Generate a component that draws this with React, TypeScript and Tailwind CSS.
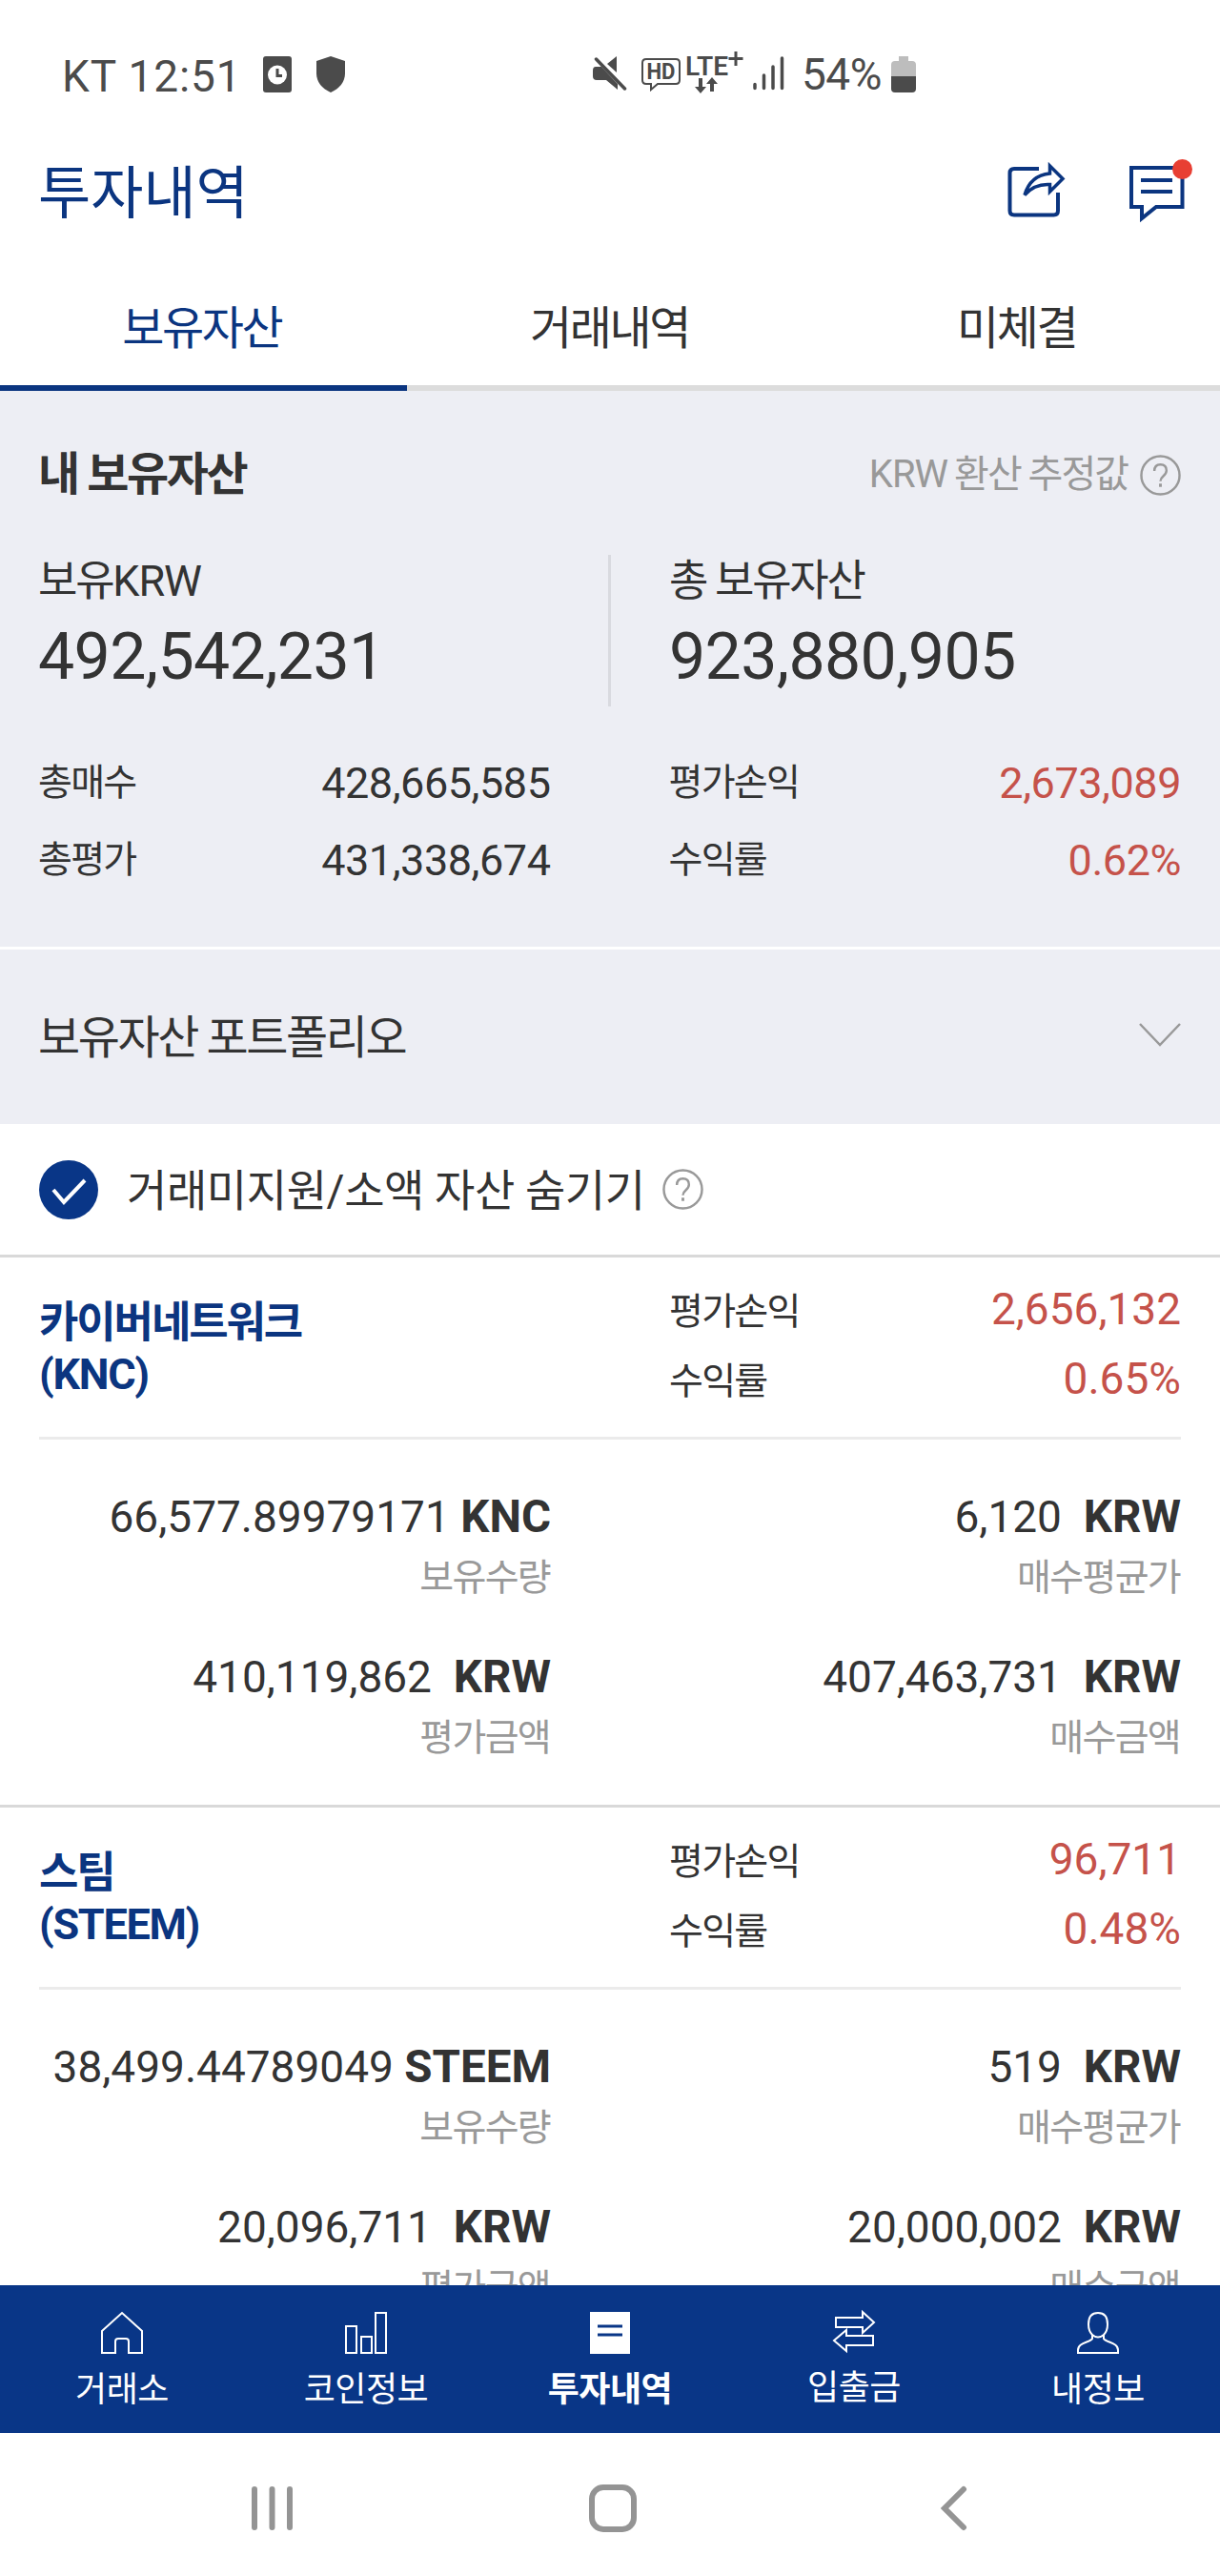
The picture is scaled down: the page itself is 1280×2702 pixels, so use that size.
import type { ReactNode } from "react";

interface Holding {
    name: string;
    symbol: string;
    quantity: string;
    profit: string;
    rate: string;
    avgPrice: string;
    evaluated: string;
    bought: string;
}

const holdings: Holding[] = [
    {
        name: "카이버네트워크",
        symbol: "KNC",
        quantity: "66,577.89979171",
        profit: "2,656,132",
        rate: "0.65%",
        avgPrice: "6,120",
        evaluated: "410,119,862",
        bought: "407,463,731",
    },
    {
        name: "스팀",
        symbol: "STEEM",
        quantity: "38,499.44789049",
        profit: "96,711",
        rate: "0.48%",
        avgPrice: "519",
        evaluated: "20,096,711",
        bought: "20,000,002",
    },
];

function StatusBar() {
    return (
        <div className="flex h-[160px] items-center pl-[65px] text-[46px] leading-[60px] text-[#4b4b4b]">
            <span className="w-[211px] whitespace-nowrap tracking-[0.9px]">KT 12:51</span>
            <svg className="mb-[5px] h-[38px] w-[30px]" viewBox="0 0 30 38" fill="none">
                <rect width="30" height="38" rx="3" fill="#4b4b4b" />
                <circle cx="15" cy="19.5" r="10" fill="#fff" />
                <path d="M15 13v7.5h5" stroke="#4b4b4b" strokeWidth="3" />
            </svg>
            <svg className="mb-[5px] ml-[26px] h-[38px] w-[30px]" viewBox="0 0 30 38" fill="#4b4b4b">
                <path d="M15 0l15 5v13c0 9-6 16-15 20C6 34 0 27 0 18V5z" />
            </svg>
            <svg className="mb-[7px] ml-[260px] h-[36px] w-[36px]" viewBox="0 0 36 36" fill="#4b4b4b">
                <path d="M3 11h6l17 18v6L14 25H4q-4 0-4-4v-6q0-4 3-4z" />
                <path d="M25 0v17L15 8z" />
                <path d="M3.500 3l30 31" stroke="#4b4b4b" strokeWidth="3.500" strokeLinecap="round" />
            </svg>
            <svg className="mb-[4px] ml-[15px] h-[36px] w-[41px]" viewBox="0 0 41 36" fill="none">
                <path d="M5 2h31q4 0 4 4v18q0 4-4 4H17l-7 6v-6H5q-4 0-4-4V6q0-4 4-4z" stroke="#4b4b4b" strokeWidth="2" />
                <text x="20.500" y="23" textAnchor="middle" fontSize="23" fontWeight="700" fill="#4b4b4b" textLength="30" lengthAdjust="spacingAndGlyphs">HD</text>
            </svg>
            <svg className="mb-[7px] ml-[6px] h-[46px] w-[62px]" viewBox="0 0 62 46" fill="none">
                <text x="-1" y="25" fontSize="28" fontWeight="600" fill="#4b4b4b" textLength="45" lengthAdjust="spacingAndGlyphs">LTE</text>
                <path d="M52 0v15M44.500 7.500h15" stroke="#4b4b4b" strokeWidth="3" />
                <path d="M15 28v11M27 42V32" stroke="#4b4b4b" strokeWidth="4" />
                <path d="M9 37h12l-6 7zM21 34h12l-6-7z" fill="#4b4b4b" />
            </svg>
            <svg className="mb-[6px] ml-[8px] h-[36px] w-[33px]" viewBox="0 0 33 36" stroke="#4b4b4b" strokeWidth="3.500" strokeLinecap="round">
                <path d="M2 29.500v4M11.500 20v13.500M21 11v22.500M30.500 2v31.500" />
            </svg>
            <span className="mb-[5px] ml-[18px] w-[94px] tracking-[-0.5px]">54%</span>
            <svg className="mb-[5px] h-[38px] w-[26px]" viewBox="0 0 26 38">
                <path d="M8 0h10v5h4q4 0 4 4v12H0V9q0-4 4-4h4z" fill="#bdbdbd" />
                <path d="M0 21h26v13q0 4-4 4H4q-4 0-4-4z" fill="#4b4b4b" />
            </svg>
        </div>
    );
}

function Header() {
    return (
        <header className="flex h-[88px] justify-between pl-[40px] pr-[37px]">
            <h1 className="text-[60px] leading-[88px] text-[#0b3580]">투자내역</h1>
            <div className="flex items-start">
                <svg className="mt-[9px] h-[60px] w-[62px]" viewBox="0 0 62 60" fill="none" stroke="#0b3580" strokeWidth="4">
                    <path d="M33 8H7Q2.500 8 2.500 12.500v39.500q0 4.500 4.500 4.500h41.500q4.500 0 4.500-4.500V33" />
                    <path d="M44.500 5l13.500 13.500-13.500 13.500v-7.500q-16-1-26.500 11Q24 15 44.500 13z" strokeWidth="3.500" />
                </svg>
                <div className="relative ml-[66px] mt-[7px] pt-[7px]">
                    <svg className="h-[60px] w-[58px]" viewBox="0 0 58 60" fill="none" stroke="#0b3580" strokeWidth="4">
                        <path d="M2 2h53.500v41H28L13 55V43H2z" />
                        <path d="M12 15h33M12 27h33" />
                    </svg>
                    <span className="absolute -right-[8px] top-0 h-[21px] w-[21px] rounded-full bg-[#e83f33]" />
                </div>
            </div>
        </header>
    );
}

function Tabs() {
    return (
        <nav className="mt-[36px] grid h-[126px] grid-cols-3 text-center text-[48px] leading-[122px] tracking-[-0.05em]">
            <div className="h-[126px] border-b-[6px] border-[#0b3580] pr-[3px] text-[#0b3580]">보유자산</div>
            <div className="h-[126px] border-b-[6px] border-[#dcdcdc] pr-[1px]">거래내역</div>
            <div className="h-[126px] border-b-[6px] border-[#dcdcdc]">미체결</div>
        </nav>
    );
}

function HelpIcon() {
    return (
        <svg className="h-[43px] w-[43px]" viewBox="0 0 44 44" fill="none" stroke="#999" strokeWidth="2.500">
            <circle cx="22" cy="22" r="20.500" />
            <path d="M15.500 17.500q0-7 6.500-7t6.500 6.500q0 3-3.500 6-3 2.500-3 5.500" />
            <path d="M22 31v3.500" strokeWidth="3" />
        </svg>
    );
}

function SummaryRow({ label, value, red }: { label: string; value: string; red?: boolean }) {
    return (
        <div className="flex h-[81px] items-center justify-between">
            <span className="text-[39px] tracking-[-1.7px]">{label}</span>
            <span className={red ? "text-[45px] tracking-[-0.45px] text-[#c5524a]" : "text-[45px] tracking-[-0.45px]"}>{value}</span>
        </div>
    );
}

function Summary() {
    return (
        <section className="h-[583px] bg-[#edeef4] pl-[40px] pr-[41px] pt-[58px]">
            <div className="flex h-[60px] items-center justify-between">
                <h2 className="text-[48px] font-bold tracking-[-0.05em]">내 보유자산</h2>
                <div className="flex items-center text-[40px] tracking-[-0.05em] text-[#999]">
                    <span className="mr-[7px] tracking-[-1px]">KRW</span>
                    <span className="mr-[13px]">환산 추정값</span>
                    <HelpIcon />
                </div>
            </div>
            <div className="mt-[54px] flex h-[159px]">
                <div className="w-[598px]">
                    <div className="text-[45px] leading-[56px] tracking-[-0.05em]">
                        보유<span className="tracking-[-1.1px]">KRW</span>
                    </div>
                    <div className="mt-[11px] text-[68px] leading-[80px] tracking-[-0.65px]">492,542,231</div>
                </div>
                <div className="w-[3px] bg-[#d9dadf]" />
                <div className="pl-[61px]">
                    <div className="text-[45px] leading-[56px] tracking-[-0.05em]">총 보유자산</div>
                    <div className="mt-[11px] text-[68px] leading-[80px] tracking-[-0.65px]">923,880,905</div>
                </div>
            </div>
            <div className="mt-[40px] grid grid-cols-2 gap-x-[124px]">
                <SummaryRow label="총매수" value="428,665,585" />
                <SummaryRow label="평가손익" value="2,673,089" red />
                <SummaryRow label="총평가" value="431,338,674" />
                <SummaryRow label="수익률" value="0.62%" red />
            </div>
        </section>
    );
}

function Portfolio() {
    return (
        <section className="flex h-[186px] items-center justify-between border-t-[3px] border-white bg-[#edeef4] pl-[40px] pr-[41px]">
            <span className="pt-[3px] text-[48px] tracking-[-0.05em]">보유자산 포트폴리오</span>
            <svg className="mb-[3px] h-[28px] w-[44px]" viewBox="0 0 44 28" fill="none" stroke="#999" strokeWidth="2.500">
                <path d="M1 2l21 22L43 2" />
            </svg>
        </section>
    );
}

function HideFilter() {
    return (
        <div className="flex h-[137px] items-center pl-[41px]">
            <svg className="h-[62px] w-[62px]" viewBox="0 0 62 62" fill="none">
                <circle cx="31" cy="31" r="31" fill="#093687" />
                <path d="M15 31l11 13 22-23" stroke="#fff" strokeWidth="4" />
            </svg>
            <span className="ml-[30px] mr-[18px] pt-[4px] text-[46px] tracking-[-0.4px]">거래미지원/소액 자산 숨기기</span>
            <HelpIcon />
        </div>
    );
}

function Amount({ value, unit, label }: { value: ReactNode; unit: string; label: string }) {
    return (
        <div className="text-right">
            <div className="whitespace-pre text-[46px] leading-[62px]">
                {value}
                <b className="text-[47.5px] leading-none">{unit}</b>
            </div>
            <div className="pr-[1px] text-[39px] leading-[66px] tracking-[-1.7px] text-[#999]">{label}</div>
        </div>
    );
}

function HoldingCard({ item }: { item: Holding }) {
    return (
        <article className="h-[577px] shrink-0 border-t-[3px] border-[#d9d9d9] px-[41px]">
            <div className="grid h-[191px] grid-cols-2 gap-x-[124px] border-b-[3px] border-[#ebebeb]">
                <h3 className="pt-[42px] text-[45px] font-bold leading-[54px] tracking-[-2.1px] text-[#0b3580]">
                    {item.name}
                    <br />
                    <span className="tracking-[-1.3px]">({item.symbol})</span>
                </h3>
                <div className="pt-[21px]">
                    <div className="flex h-[73px] items-center justify-between">
                        <span className="text-[39px] tracking-[-1.7px]">평가손익</span>
                        <span className="pb-[7px] text-[46px] text-[#c5524a]">{item.profit}</span>
                    </div>
                    <div className="flex h-[73px] items-center justify-between">
                        <span className="text-[39px] tracking-[-1.7px]">수익률</span>
                        <span className="pb-[7px] text-[46px] text-[#c5524a]">{item.rate}</span>
                    </div>
                </div>
            </div>
            <div className="grid grid-cols-2 gap-x-[124px] gap-y-[40px] pt-[50px]">
                <Amount value={item.quantity + " "} unit={item.symbol} label="보유수량" />
                <Amount value={item.avgPrice + "  "} unit="KRW" label="매수평균가" />
                <Amount value={item.evaluated + "  "} unit="KRW" label="평가금액" />
                <Amount value={item.bought + "  "} unit="KRW" label="매수금액" />
            </div>
        </article>
    );
}

const menu = [
    {
        label: "거래소",
        icon: <path d="M1 20L22 1l21 19v23H29V31q0-3-3-3h-8q-3 0-3 3v12H1z" />,
    },
    {
        label: "코인정보",
        icon: <path d="M1 15h11v28H1zM17 26h11v17H17zM32 1h11v42H32z" />,
    },
    {
        label: "투자내역",
        active: true,
        icon: (
            <>
                <path d="M1 0h42v44H1z" fill="#fff" stroke="none" />
                <path d="M9 15h26M9 24h26" stroke="#093687" strokeWidth="3" />
            </>
        ),
    },
    {
        label: "입출금",
        raised: true,
        icon: <path d="M3 6h28V0l12 11-12 11v-6H3zM42 25H14v-6L1 30l13 11v-6h28z" />,
    },
    {
        label: "내정보",
        icon: (
            <path d="M22 1c-7 0-10 5-10 12 0 5 2 9 4 11v4c-2 4-15 4-15 12v3h42v-3c0-8-13-8-15-12v-4c2-2 4-6 4-11 0-7-3-12-10-12zM16 24q6 5 12 0" />
        ),
    },
];

function BottomMenu() {
    return (
        <nav className="grid h-[155px] grid-cols-5 bg-[#093687] pt-[28px] text-[36px] leading-[44px] tracking-[-0.5px] text-white">
            {menu.map((m) => (
                <div key={m.label} className="flex flex-col items-center">
                    <svg className="h-[44px] w-[44px] overflow-visible" viewBox="0 0 44 44" fill="none" stroke="#fff" strokeWidth="2">
                        {m.icon}
                    </svg>
                    <span className={m.active ? "mt-[16px] font-bold" : m.raised ? "mt-[14px]" : "mt-[16px]"}>{m.label}</span>
                </div>
            ))}
        </nav>
    );
}

function SystemNav() {
    return (
        <div className="flex h-[150px] items-center pl-[264px] pt-[8px]">
            <svg className="h-[48px] w-[44px]" viewBox="0 0 44 48" stroke="#949494" strokeWidth="6" strokeLinecap="round">
                <path d="M3 4v40M21.500 4v40M40 4v40" />
            </svg>
            <div className="ml-[310px] h-[50px] w-[50px] rounded-[15px] border-[6px] border-[#949494]" />
            <svg className="ml-[318px] h-[48px] w-[30px]" viewBox="0 0 30 48" fill="none" stroke="#949494" strokeWidth="6" strokeLinecap="round">
                <path d="M25 4L5 24l20 20" />
            </svg>
        </div>
    );
}

export default function App() {
    return (
        <div className="h-[2702px] w-[1280px] overflow-hidden bg-white font-[Roboto,'Noto_Sans_CJK_KR',sans-serif] text-[#333]">
            <StatusBar />
            <Header />
            <Tabs />
            <Summary />
            <Portfolio />
            <HideFilter />
            <div className="flex h-[1081px] flex-col overflow-hidden">
                {holdings.map((item) => (
                    <HoldingCard key={item.symbol} item={item} />
                ))}
            </div>
            <BottomMenu />
            <SystemNav />
        </div>
    );
}
